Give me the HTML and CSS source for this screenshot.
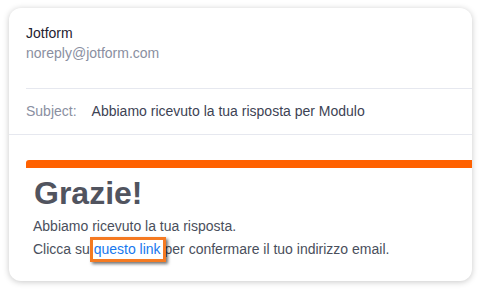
FILE: index.html
```html
<!DOCTYPE html>
<html lang="it">
<head>
<meta charset="utf-8">
<title>Jotform email</title>
<link rel="stylesheet" href="styles.css">
</head>
<body>
<div class="card">
  <div class="sender">
    <div class="name">Jotform</div>
    <div class="addr">noreply@jotform.com</div>
  </div>
  <div class="subject">
    <span class="label">Subject:</span>
    <span class="subj-text">Abbiamo ricevuto la tua risposta per Modulo</span>
  </div>
  <div class="body">
    <div class="bar"></div>
    <h1 class="title">Grazie!</h1>
    <p class="msg">Abbiamo ricevuto la tua risposta.<br>Clicca su <a class="link" href="#">questo link</a> per confermare il tuo indirizzo email.</p>
  </div>
</div>
</body>
</html>
```
FILE: styles.css
```css
html, body {
  margin: 0;
  padding: 0;
  background: #ffffff;
}
body {
  padding: 8px 9px 10px 9px;
  font-family: "Liberation Sans", Arial, sans-serif;
  font-size: 14px;
}
.card {
  height: 273px;
  box-sizing: border-box;
  background: #fff;
  border-radius: 12px;
  box-shadow: 0 1px 6px rgba(0, 0, 0, 0.22);
  overflow: hidden;
}
.sender {
  margin-left: 17px;
  padding: 15px 0 25px 0;
  border-bottom: 1px solid #e6e8ef;
  line-height: 20px;
}
.name {
  color: #1f2231;
}
.addr {
  color: #8a8fa1;
}
.subject {
  padding: 12px 0 13px 17px;
  line-height: 20px;
  border-bottom: 1px solid #e6e8ef;
  display: flex;
  gap: 15px;
}
.label {
  color: #8a8fa1;
}
.subj-text {
  color: #3d4354;
}
.body {
  padding: 25px 0 0 17px;
}
.bar {
  height: 8px;
  background: #ff6100;
  border-top-left-radius: 3px;
}
.title {
  margin: 6px 0 0 8px;
  font-size: 32px;
  line-height: 38px;
  font-weight: bold;
  color: #51545f;
}
.msg {
  margin: 4px 0 0 7px;
  line-height: 21px;
  color: #4a4f5c;
}
.link {
  position: relative;
  display: inline-block;
  line-height: 19px;
  padding: 0 2px 0 1px;
  margin: 0 -5px 0 -4px;
  border: 3px solid #f57a22;
  background: #fff;
  color: #1778ee;
  text-decoration: none;
  box-shadow: 2px 2px 3px rgba(0, 0, 0, 0.55);
}
```
